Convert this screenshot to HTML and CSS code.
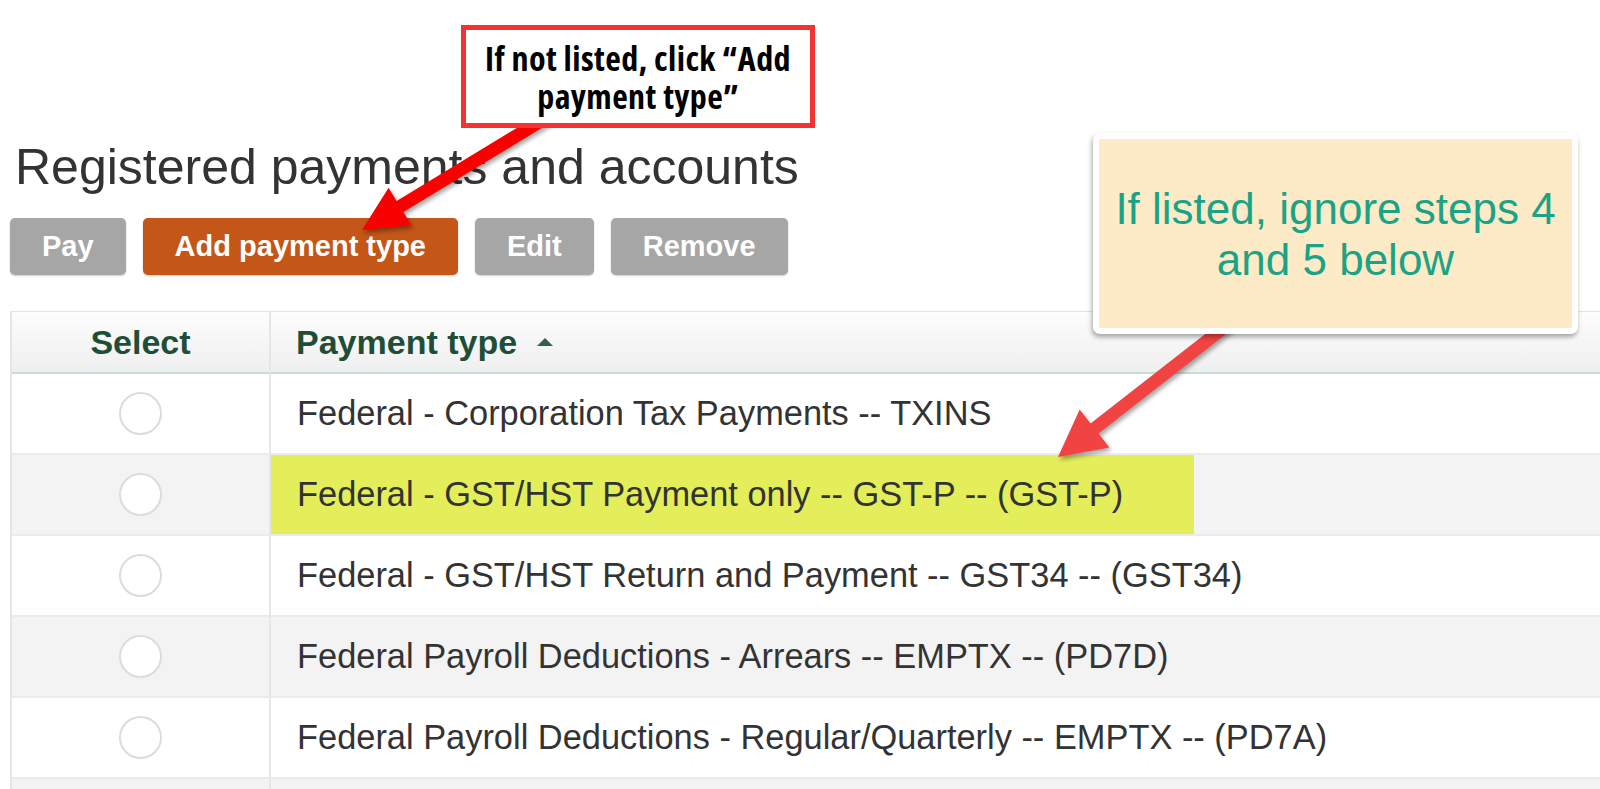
FILE: index.html
```html
<!DOCTYPE html>
<html>
  <head>
    <link rel="stylesheet" href="styles.css">
  </head>
  <body>
    <main class="page">
      <h1 class="page-title">Registered payments and accounts</h1>

      <div class="toolbar">
        <button class="btn btn-off">Pay</button>
        <button class="btn btn-main">Add payment type</button>
        <button class="btn btn-off">Edit</button>
        <button class="btn btn-off">Remove</button>
      </div>

      <div class="grid-wrap">
        <table class="grid">
          <colgroup>
            <col class="col-select">
            <col>
          </colgroup>
          <thead>
            <tr>
              <th class="th-select">Select</th>
              <th class="th-type">Payment type <span class="sort-up"></span></th>
            </tr>
          </thead>
          <tbody>
            <tr>
              <td class="cell-radio"><span class="radio"></span></td>
              <td>Federal - Corporation Tax Payments -- TXINS</td>
            </tr>
            <tr class="alt">
              <td class="cell-radio"><span class="radio"></span></td>
              <td class="marked">Federal - GST/HST Payment only -- GST-P -- (GST-P)</td>
            </tr>
            <tr>
              <td class="cell-radio"><span class="radio"></span></td>
              <td>Federal - GST/HST Return and Payment -- GST34 -- (GST34)</td>
            </tr>
            <tr class="alt">
              <td class="cell-radio"><span class="radio"></span></td>
              <td>Federal Payroll Deductions - Arrears -- EMPTX -- (PD7D)</td>
            </tr>
            <tr>
              <td class="cell-radio"><span class="radio"></span></td>
              <td>Federal Payroll Deductions - Regular/Quarterly -- EMPTX -- (PD7A)</td>
            </tr>
            <tr class="alt">
              <td class="cell-radio"></td>
              <td></td>
            </tr>
          </tbody>
        </table>
      </div>
    </main>

    <!-- setas das anotacoes -->
    <svg class="arrows" width="1600" height="789" viewBox="0 0 1600 789">
      <polygon class="arrow-a" points="547.2,109.4 396.6,200.9 388.6,187.7 362,230 411.4,225.3 403.4,212.1 554,120.6"/>
      <polygon class="arrow-b" points="1236,309.9 1090.5,423.4 1079.7,409.6 1058,457 1109.3,447.4 1098.5,433.6 1244,320.1"/>
    </svg>

    <div class="note note-red">If not listed, click “Add<br>payment type”</div>

    <div class="note note-tip">
      <div class="note-tip-inner">If listed, ignore steps 4<br>and 5 below</div>
    </div>
  </body>
</html>
```

FILE: styles.css
```css
/* base */
body {
  margin: 0;
  overflow: hidden;
  background: #fff;
  font-family: "Liberation Sans", Arial, sans-serif;
  color: #333;
}

.page {
  padding-left: 10px;
}

.page-title {
  margin: 139px 0 0 5px;
  font-size: 50px;
  font-weight: normal;
  line-height: 56px;
  color: #333;
}

/* botoes */
.toolbar {
  display: flex;
  gap: 17px;
  margin-top: 23px;
}

.btn {
  height: 57px;
  padding: 0 32px;
  border: none;
  border-radius: 5px;
  font-family: "Liberation Sans", Arial, sans-serif;
  font-size: 29px;
  font-weight: bold;
  color: #fff;
  box-shadow: 0 1px 2px rgba(0, 0, 0, 0.2);
}

.btn-off {
  background-color: #a6a6a6;
}

.btn-main {
  background-color: #c45618;
}

/* tabela */
.grid-wrap {
  margin-top: 36px;
}

.grid {
  width: 1640px;
  table-layout: fixed;
  border-collapse: separate;
  border-spacing: 0;
  border-top: 1px solid #e4e4e4;
  border-left: 2px solid #e6e6e6;
  font-size: 34.4px;
}

.col-select {
  width: 259px;
}

.grid th {
  height: 60px;
  padding: 0;
  background: linear-gradient(to bottom, #fdfdfd, #efefef);
  border-bottom: 2px solid #c6dfd1;
  color: #1f4e37;
  font-weight: bold;
  font-size: 34px;
}

.th-select {
  text-align: center;
  border-right: 2px solid #e6e6e6;
}

.th-type {
  text-align: left;
  padding-left: 25px !important;
}

.sort-up {
  display: inline-block;
  width: 0;
  height: 0;
  margin-left: 10px;
  vertical-align: middle;
  position: relative;
  top: -3px;
  border-left: 8px solid transparent;
  border-right: 8px solid transparent;
  border-bottom: 8px solid #345f50;
}

.grid td {
  height: 79px;
  padding: 0 0 0 26px;
  border-bottom: 2px solid #ebebeb;
  color: #333;
  white-space: nowrap;
}

.grid tr.alt td {
  background-color: #f3f3f3;
}

.grid td.cell-radio {
  padding: 0;
  text-align: center;
  border-right: 2px solid #e6e6e6;
}

.radio {
  display: inline-block;
  width: 39px;
  height: 39px;
  border: 2px solid #dcdcdc;
  border-radius: 50%;
  background: #fff;
  vertical-align: middle;
}

.grid tr.alt td.marked {
  background: linear-gradient(to right, #e3ee5a 923px, #f3f3f3 923px);
}

/* anotacoes */
.arrows {
  position: absolute;
  left: 0;
  top: 0;
  pointer-events: none;
}

.arrow-a {
  fill: #fb0000;
  filter: drop-shadow(2px 3px 2px rgba(0, 0, 0, 0.35));
}

.arrow-b {
  fill: #f24343;
  filter: drop-shadow(2px 3px 2px rgba(0, 0, 0, 0.35));
}

.note {
  position: absolute;
  box-sizing: border-box;
}

.note-red {
  left: 461px;
  top: 25px;
  width: 354px;
  height: 103px;
  border: 5px solid #f53232;
  background: #fff;
  display: flex;
  align-items: center;
  justify-content: center;
  text-align: center;
  font-family: "Open Sans", sans-serif;
  font-stretch: 82%;
  font-weight: bold;
  font-size: 34px;
  letter-spacing: 0.4px;
  line-height: 38px;
  color: #000;
}

.note-tip {
  left: 1093px;
  top: 133px;
  width: 485px;
  height: 201px;
  padding: 6px;
  background: #fff;
  border-radius: 7px;
  box-shadow: -1px 3px 5px rgba(0, 0, 0, 0.35);
}

.note-tip-inner {
  height: 100%;
  border-radius: 2px;
  background-color: #fdebc8;
  display: flex;
  align-items: center;
  justify-content: center;
  text-align: center;
  font-size: 44px;
  line-height: 51px;
  color: #1aa386;
}
```
